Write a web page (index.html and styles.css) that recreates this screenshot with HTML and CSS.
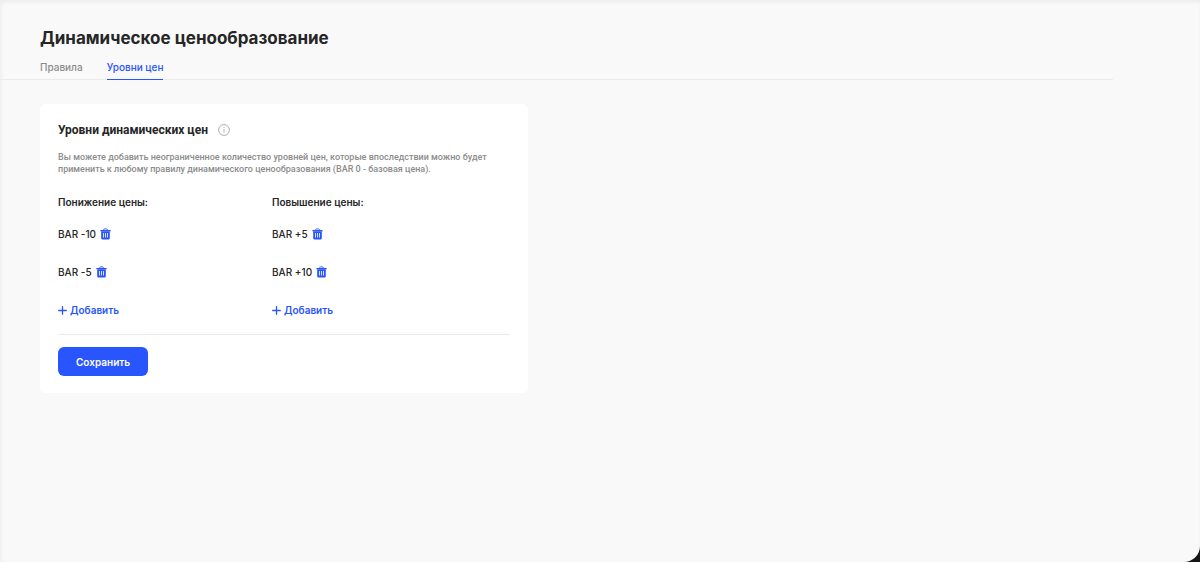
FILE: index.html
```html
<!DOCTYPE html>
<html lang="ru">
<head>
    <meta charset="UTF-8">
    <meta name="viewport" content="width=device-width, initial-scale=1.0">
    <title>Динамическое ценообразование</title>
    <link rel="stylesheet" href="styles.css">
</head>
<body>
    <svg class="sprite" aria-hidden="true">
        <symbol id="trash" viewBox="0 0 12 12">
            <path d="M4 2V1.2C4 .6 4.4.4 5 .4h2c.6 0 1 .2 1 .8V2" fill="none" stroke="currentColor"/>
            <rect x="0.3" y="1.6" width="11.4" height="1.5" rx="0.5" fill="currentColor"/>
            <path fill="currentColor" fill-rule="evenodd" d="M1.3 3.1h9.4v7.5c0 .8-.5 1.3-1.3 1.3H2.6c-.8 0-1.3-.5-1.3-1.3zM3.3 5v4.8h.9V5zm2.2 0v4.8h.9V5zm2.2 0v4.8h.9V5z"/>
        </symbol>
        <symbol id="plus" viewBox="0 0 9 9">
            <path d="M4.5.7v7.6M.7 4.5h7.6" fill="none" stroke="currentColor" stroke-width="1.3" stroke-linecap="round"/>
        </symbol>
    </svg>

    <div class="page">
        <header class="header">
            <h1>Динамическое ценообразование</h1>
            <nav class="tabs">
                <a href="#rules" class="tab">Правила</a>
                <a href="#levels" class="tab active">Уровни цен</a>
            </nav>
        </header>

        <main class="content">
            <form class="card">
                <div class="card-title">
                    <h2>Уровни динамических цен</h2>
                    <button type="button" class="icon-btn info" aria-label="Справка">
                        <svg viewBox="0 0 12 12" width="12" height="12">
                            <circle cx="6" cy="6" r="5.4" fill="none" stroke="currentColor" stroke-width="0.9"/>
                            <path d="M6 5.2v3.4" stroke="currentColor" stroke-width="0.9"/>
                            <circle cx="6" cy="3.6" r="0.6" fill="currentColor"/>
                        </svg>
                    </button>
                </div>
                <p class="description">Вы можете добавить неограниченное количество уровней цен, которые впоследствии можно будет применить к любому правилу динамического ценообразования (BAR 0 - базовая цена).</p>

                <div class="levels">
                    <section>
                        <h3>Понижение цены:</h3>
                        <ul>
                            <li>BAR -10 <button type="button" class="icon-btn" aria-label="Удалить BAR -10"><svg width="11" height="12"><use href="#trash"/></svg></button></li>
                            <li>BAR -5 <button type="button" class="icon-btn" aria-label="Удалить BAR -5"><svg width="11" height="12"><use href="#trash"/></svg></button></li>
                        </ul>
                        <button type="button" class="add"><svg width="9" height="9"><use href="#plus"/></svg>Добавить</button>
                    </section>
                    <section>
                        <h3>Повышение цены:</h3>
                        <ul>
                            <li>BAR +5 <button type="button" class="icon-btn" aria-label="Удалить BAR +5"><svg width="11" height="12"><use href="#trash"/></svg></button></li>
                            <li>BAR +10 <button type="button" class="icon-btn" aria-label="Удалить BAR +10"><svg width="11" height="12"><use href="#trash"/></svg></button></li>
                        </ul>
                        <button type="button" class="add"><svg width="9" height="9"><use href="#plus"/></svg>Добавить</button>
                    </section>
                </div>

                <div class="card-footer">
                    <button type="submit" class="save">Сохранить</button>
                </div>
            </form>
        </main>
    </div>
</body>
</html>
```

FILE: styles.css
```css
* {
    box-sizing: border-box;
}

html {
    background-color: #141614;
}

body {
    margin: 0;
    font-family: Inter, "Liberation Sans", sans-serif;
    font-size: 10px;
    line-height: 16px;
    color: #262626;
}

h1, h2, h3, p, ul {
    margin: 0;
    padding: 0;
}

h2, .description {
    font-family: Roboto, "Liberation Sans", sans-serif;
}

button {
    padding: 0;
    border: none;
    background: none;
    font: inherit;
    cursor: pointer;
}

svg {
    display: block;
}

.sprite {
    display: none;
}

.page {
    min-height: 100vh;
    background-color: #f9f9f9;
    border-bottom-right-radius: 16px;
    box-shadow: inset 1px 2px 4px rgba(0, 0, 0, 0.06);
}

/* Шапка */
.header {
    margin-right: 87px;
    padding: 26px 0 0 40px;
    border-bottom: 1px solid #ebebeb;
}

.header h1 {
    font-size: 17px;
    line-height: 24px;
    font-weight: 700;
}

.tabs {
    display: flex;
    gap: 24px;
    margin-top: 9px;
}

.tab {
    margin-bottom: -1px;
    padding-bottom: 4px;
    border-bottom: 1px solid transparent;
    color: #8c8c8c;
    font-weight: 500;
    text-decoration: none;
}

.tab.active {
    color: #2955ff;
    border-bottom-color: #2955ff;
}

/* Карточка */
.content {
    padding: 24px 40px;
}

.card {
    max-width: 488px;
    padding: 17px 18px;
    background-color: white;
    border-radius: 6px;
}

.card-title {
    display: flex;
    align-items: center;
    gap: 10px;
}

.card-title h2 {
    font-size: 12px;
    line-height: 18px;
    font-weight: 700;
}

.icon-btn {
    color: #2955ff;
}

.icon-btn.info {
    color: #a6a6a6;
}

.description {
    margin-top: 12px;
    font-size: 9px;
    line-height: 12px;
    font-weight: 500;
    color: #8c8c8c;
}

.levels {
    display: grid;
    grid-template-columns: 214px 1fr;
    margin-top: 19px;
}

.levels h3 {
    margin-bottom: 16px;
    font-size: 10px;
    line-height: 16px;
    font-weight: 600;
}

.levels li {
    display: flex;
    align-items: center;
    gap: 4px;
    margin-bottom: 22px;
    font-weight: 500;
}

.add {
    display: flex;
    align-items: center;
    gap: 3px;
    color: #2955ff;
    font-weight: 600;
}

.card-footer {
    margin-top: 16px;
    padding-top: 12px;
    border-top: 1px solid #ebebeb;
}

.save {
    height: 29px;
    padding: 0 18px;
    background-color: #2955ff;
    border-radius: 6px;
    color: white;
    font-weight: 600;
}

.save:hover {
    background-color: #1f47e0;
}
```
